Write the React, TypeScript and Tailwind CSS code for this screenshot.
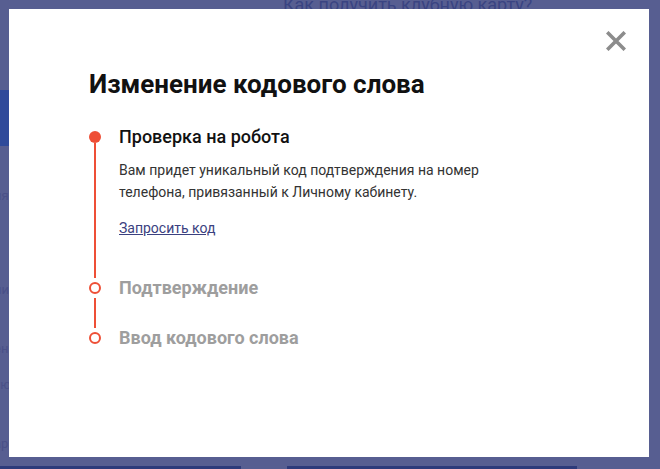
import React from 'react';

type Step = {
    title: string;
    active: boolean;
    last?: boolean;
};

const CloseIcon = () => (
    <svg width="20" height="20" viewBox="0 0 20 20">
        <path d="M2.5 2.5 L17.5 17.5 M17.5 2.5 L2.5 17.5" stroke="#8c8c8c" strokeWidth="3.6" strokeLinecap="square" fill="none" />
    </svg>
);

const StepRow = ({ step, children, padBottom }: { step: Step; children?: React.ReactNode; padBottom: string }) => (
    <div className="flex gap-[18px]">
        <div className="flex flex-col items-center w-3">
            {step.active ? (
                <div className="mt-[6px] h-3 w-3 rounded-full bg-[#ee4f36]"></div>
            ) : (
                <div className="mt-[6px] h-3 w-3 rounded-full border-2 border-[#ee4f36] bg-white"></div>
            )}
            {!step.last && (
                <div className={`w-0.5 flex-1 bg-[#ee4f36] mb-[-2px] ${step.active ? '' : 'mt-1'}`}></div>
            )}
        </div>
        <div className={`flex-1 ${padBottom}`}>
            <div
                className={`h-6 leading-6 text-[18px] ${step.active ? 'font-medium text-[#111]' : 'font-bold text-[#9e9e9e]'}`}
            >
                {step.title}
            </div>
            {children}
        </div>
    </div>
);

const Background = () => (
    <div className="flex flex-col h-full font-['Roboto',sans-serif]">
        <div className="pl-[283px] -mt-[7px] text-[18px] leading-6 text-[#3a4482]">Как получить клубную карту?</div>
        <div className="mt-[73px] h-[56px] w-[9px] bg-[#2f4a9a]"></div>
        <div className="flex flex-col text-[13px] text-[#4a5088] -ml-[6px]">
            <span className="mt-[40px]">ия</span>
            <span className="mt-[74px]">ни</span>
            <span className="mt-[40px]">ен</span>
            <span className="mt-[16px]">ую</span>
            <span className="mt-[40px]">ар</span>
        </div>
        <div className="mt-auto flex h-[3px]">
            <div className="w-[241px] bg-[#2d3a7a]"></div>
            <div className="w-[46px]"></div>
            <div className="w-[290px] bg-[#2d3a7a]"></div>
        </div>
    </div>
);

const App = () => {
    const steps: Step[] = [
        { title: 'Проверка на робота', active: true },
        { title: 'Подтверждение', active: false },
        { title: 'Ввод кодового слова', active: false, last: true },
    ];

    return (
        <div className="relative w-full h-[469px] overflow-hidden bg-[#575e91]">
            <Background />
            <div className="absolute left-[9px] top-[9px] w-[640px] h-[448px] bg-white pl-[80px] pt-[59px] font-['Roboto',sans-serif]">
                <button className="absolute right-[23px] top-[22px]">
                    <CloseIcon />
                </button>
                <h1 className="text-[26px] leading-8 font-bold text-[#111]">Изменение кодового слова</h1>
                <div className="mt-[25px] flex flex-col">
                    <StepRow step={steps[0]} padBottom="pb-[37px]">
                        <p className="mt-[10px] text-[14px] leading-[22px] text-[#333]">
                            Вам придет уникальный код подтверждения на номер
                            <br />
                            телефона, привязанный к Личному кабинету.
                        </p>
                        <a className="mt-[14px] block text-[14px] leading-[22px] text-[#3b4180] underline">Запросить код</a>
                    </StepRow>
                    <StepRow step={steps[1]} padBottom="pb-[26px]" />
                    <StepRow step={steps[2]} padBottom="" />
                </div>
            </div>
        </div>
    );
};

export default App;
